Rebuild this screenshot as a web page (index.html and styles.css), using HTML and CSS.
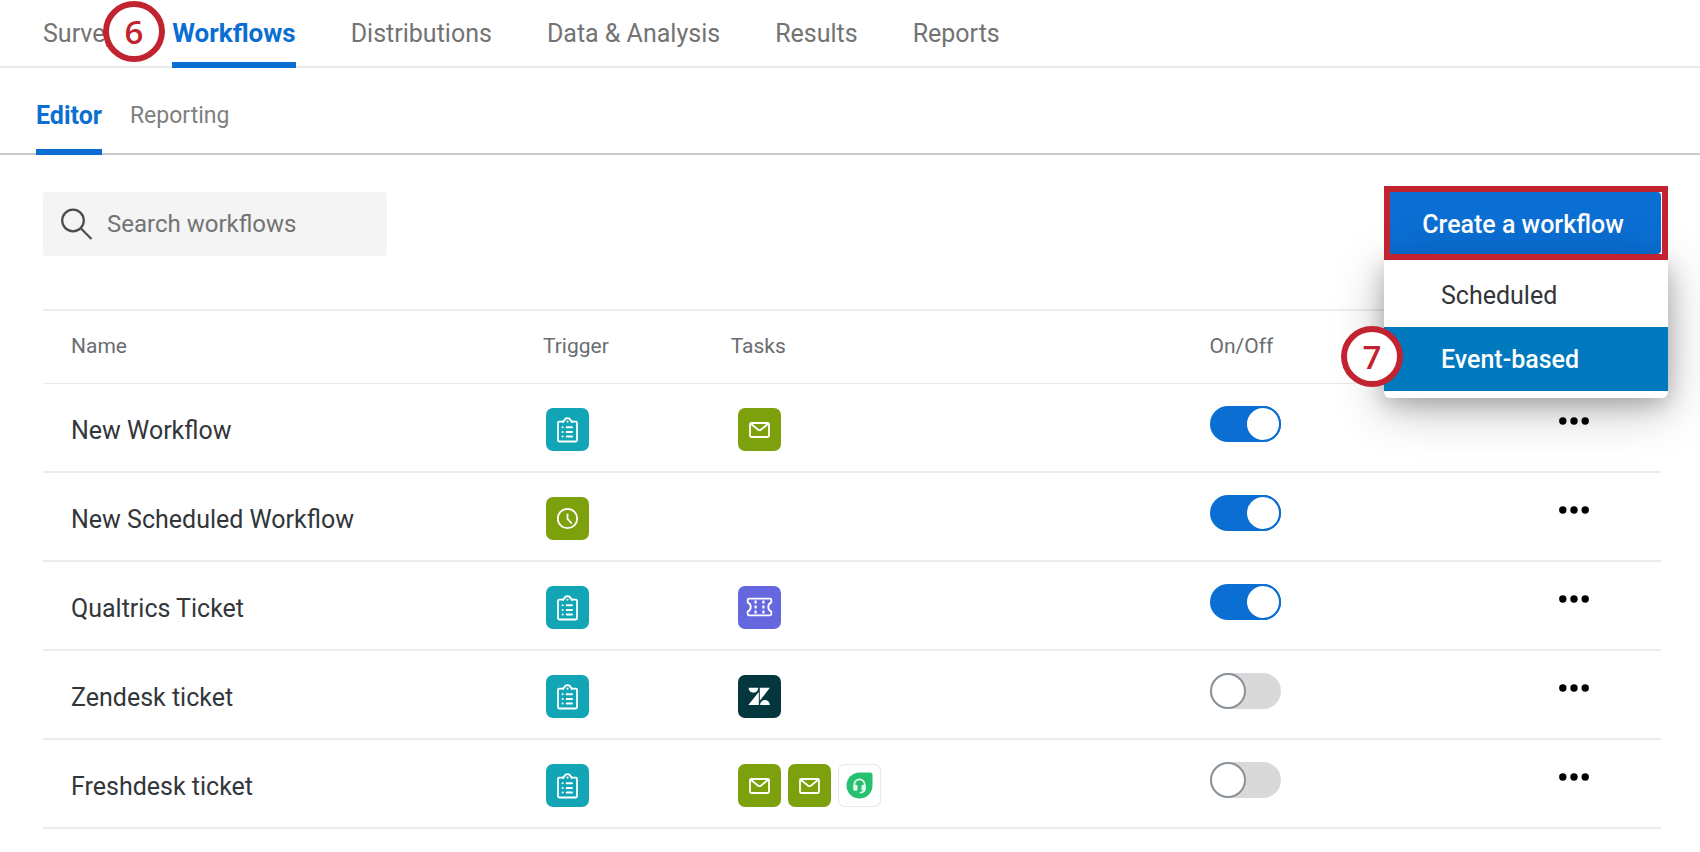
FILE: index.html
```html
<!DOCTYPE html>
<html lang="en">
<head>
<meta charset="utf-8">
<title>Workflows</title>
<link rel="stylesheet" href="styles.css">
</head>
<body>
<svg class="sprite" aria-hidden="true">
  <symbol id="i-survey" viewBox="0 0 43 43">
    <g fill="none" stroke="#fff" stroke-width="1.8" stroke-linejoin="round" stroke-linecap="round">
      <path d="M17.300 13.700H13.200Q12 13.700 12 14.900V32.300Q12 33.500 13.200 33.500H29.800Q31 33.500 31 32.300V14.900Q31 13.700 29.800 13.700H25.700"/>
      <path d="M17.300 14V13Q17.600 12.700 18.300 12.600A3.300 3.300 0 0 1 24.700 12.600Q25.400 12.700 25.700 13V14"/>
      <path stroke-width="2" d="M20.700 19.300H26M20.700 23.900H26M20.700 28.500H26M16.600 19.300H16.700M16.600 23.900H16.700M16.600 28.500H16.700"/>
    </g>
    <circle cx="21.500" cy="13.600" r="1.100" fill="#fff"/>
  </symbol>
  <symbol id="i-mail" viewBox="0 0 43 43">
    <g fill="none" stroke="#fff" stroke-width="1.800" stroke-linejoin="round">
      <rect x="12" y="15" width="19" height="14" rx="1.200"/>
      <path d="M12.500 15.500L20.200 21.700Q21.500 22.700 22.800 21.700L30.500 15.500"/>
    </g>
  </symbol>
  <symbol id="i-clock" viewBox="0 0 43 43">
    <g fill="none" stroke="#fff" stroke-width="1.800" stroke-linecap="round" stroke-linejoin="round">
      <circle cx="21.500" cy="21.500" r="9.700"/>
      <path d="M21.500 17.300V21.800L25.300 26"/>
    </g>
  </symbol>
  <symbol id="i-ticket" viewBox="0 0 43 43">
    <g fill="none" stroke="#fff" stroke-width="1.800" stroke-linejoin="round">
      <path d="M10.900 12.700H32.100Q33.300 12.700 33.300 13.900V16.400A5 5 0 0 0 33.300 25.600V28.100Q33.300 29.300 32.100 29.300H10.900Q9.700 29.300 9.700 28.100V25.600A5 5 0 0 0 9.700 16.400V13.900Q9.700 12.700 10.900 12.700Z"/>
      <path stroke-width="2.200" stroke-dasharray="3 2" d="M17.600 14.600V27.700M25.400 14.600V27.700"/>
    </g>
  </symbol>
  <symbol id="i-zendesk" viewBox="0 0 43 43">
    <g fill="#fff">
      <path d="M10.600 12.800H20.300A4.850 5 0 0 1 10.600 12.800Z"/>
      <path d="M20.800 17V30H10.300Z"/>
      <path d="M21.800 12.800H31.800L21.800 25.800Z"/>
      <path d="M22.100 30A4.850 5 0 0 1 31.800 30Z"/>
    </g>
  </symbol>
  <symbol id="i-freshdesk" viewBox="0 0 43 43">
    <path fill="#25c16f" d="M21.500 8.500H32Q34.500 8.500 34.500 11V21.500A13 13 0 1 1 21.500 8.500Z"/>
    <path d="M16.300 22V20.500A5.200 5.200 0 0 1 26.700 20.500V24.500Q26.700 28.300 22.500 28.700" fill="none" stroke="#e3f7ec" stroke-width="1.700" stroke-linecap="round"/>
    <rect x="15.300" y="20.800" width="4.200" height="6" rx="1.500" fill="#e3f7ec"/>
    <rect x="23.500" y="20.800" width="4.200" height="6" rx="1.500" fill="#e3f7ec"/>
  </symbol>
  <symbol id="i-dots" viewBox="0 0 30 8">
    <circle cx="3.800" cy="4" r="3.700"/><circle cx="15" cy="4" r="3.700"/><circle cx="26.200" cy="4" r="3.700"/>
  </symbol>
</svg>

<nav class="tabs" aria-label="Project">
  <div class="tab-slot">
    <a class="tab" href="#survey">Survey</a>
    <span class="step step-six">6</span>
  </div>
  <a class="tab active" href="#workflows" aria-current="page">Workflows</a>
  <a class="tab" href="#distributions">Distributions</a>
  <a class="tab" href="#data">Data &amp; Analysis</a>
  <a class="tab" href="#results">Results</a>
  <a class="tab" href="#reports">Reports</a>
</nav>

<nav class="subtabs" aria-label="Workflows">
  <a class="subtab active" href="#editor" aria-current="page">Editor</a>
  <a class="subtab" href="#reporting">Reporting</a>
</nav>

<main class="content">
  <div class="toolbar">
    <label class="search">
      <svg class="search-icon" viewBox="0 0 32 32" aria-hidden="true"><g fill="none" stroke="#4a4d50" stroke-width="2.200"><circle cx="12" cy="12.500" r="10.800"/><path d="M19.500 20L30.500 31"/></g></svg>
      <input class="search-input" type="search" placeholder="Search workflows" aria-label="Search workflows">
    </label>
    <div class="create">
      <button class="create-button" type="button" aria-haspopup="menu" aria-expanded="true">Create a workflow</button>
      <div class="menu" role="menu">
        <button class="menu-item" type="button" role="menuitem">Scheduled</button>
        <button class="menu-item selected" type="button" role="menuitem">Event-based</button>
        <span class="step step-seven">7</span>
      </div>
      <div class="highlight"></div>
    </div>
  </div>

  <table class="workflows">
    <colgroup><col class="col-name"><col class="col-trigger"><col class="col-tasks"><col class="col-state"><col class="col-more"></colgroup>
    <thead>
      <tr><th scope="col" class="name">Name</th><th scope="col">Trigger</th><th scope="col">Tasks</th><th scope="col">On/Off</th><th></th></tr>
    </thead>
    <tbody>
      <tr>
        <td class="name">New Workflow</td>
        <td class="trigger"><svg class="icon teal"><use href="#i-survey"/></svg></td>
        <td class="tasks"><svg class="icon green"><use href="#i-mail"/></svg></td>
        <td class="state"><input class="toggle" type="checkbox" role="switch" aria-label="New Workflow" checked></td>
        <td class="more"><button class="dots" type="button" aria-label="More options"><svg class="dots-icon"><use href="#i-dots"/></svg></button></td>
      </tr>
      <tr>
        <td class="name">New Scheduled Workflow</td>
        <td class="trigger"><svg class="icon green"><use href="#i-clock"/></svg></td>
        <td class="tasks"></td>
        <td class="state"><input class="toggle" type="checkbox" role="switch" aria-label="New Scheduled Workflow" checked></td>
        <td class="more"><button class="dots" type="button" aria-label="More options"><svg class="dots-icon"><use href="#i-dots"/></svg></button></td>
      </tr>
      <tr>
        <td class="name">Qualtrics Ticket</td>
        <td class="trigger"><svg class="icon teal"><use href="#i-survey"/></svg></td>
        <td class="tasks"><svg class="icon violet"><use href="#i-ticket"/></svg></td>
        <td class="state"><input class="toggle" type="checkbox" role="switch" aria-label="Qualtrics Ticket" checked></td>
        <td class="more"><button class="dots" type="button" aria-label="More options"><svg class="dots-icon"><use href="#i-dots"/></svg></button></td>
      </tr>
      <tr>
        <td class="name">Zendesk ticket</td>
        <td class="trigger"><svg class="icon teal"><use href="#i-survey"/></svg></td>
        <td class="tasks"><svg class="icon dark"><use href="#i-zendesk"/></svg></td>
        <td class="state"><input class="toggle" type="checkbox" role="switch" aria-label="Zendesk ticket"></td>
        <td class="more"><button class="dots" type="button" aria-label="More options"><svg class="dots-icon"><use href="#i-dots"/></svg></button></td>
      </tr>
      <tr>
        <td class="name">Freshdesk ticket</td>
        <td class="trigger"><svg class="icon teal"><use href="#i-survey"/></svg></td>
        <td class="tasks"><div class="icons"><svg class="icon green"><use href="#i-mail"/></svg><svg class="icon green"><use href="#i-mail"/></svg><svg class="icon outlined"><use href="#i-freshdesk"/></svg></div></td>
        <td class="state"><input class="toggle" type="checkbox" role="switch" aria-label="Freshdesk ticket"></td>
        <td class="more"><button class="dots" type="button" aria-label="More options"><svg class="dots-icon"><use href="#i-dots"/></svg></button></td>
      </tr>
    </tbody>
  </table>
</main>
</body>
</html>
```
FILE: styles.css
```css
*, *::before { box-sizing: border-box; }

body {
  margin: 0;
  background: #fff;
  color: #32363a;
  font: 25px/32px Roboto, "Liberation Sans", sans-serif;
}

button, input { font: inherit; margin: 0; }

.sprite { position: absolute; width: 0; height: 0; }

.tabs {
  display: flex;
  gap: 55px;
  height: 68px;
  padding-left: 43px;
  border-bottom: 2px solid #e9e9e9;
}

.tab-slot { position: relative; }

.tab, .subtab {
  display: block;
  color: #737373;
  text-decoration: none;
  white-space: nowrap;
}

.tab { height: 68px; padding-top: 18px; }

.subtabs {
  display: flex;
  gap: 28px;
  height: 87px;
  padding-left: 36px;
  border-bottom: 2px solid #c9c9c9;
}

.subtab {
  height: 87px;
  padding-top: 32px;
  color: #808080;
  font-size: 23px;
}

.tab.active, .subtab.active {
  color: #0b6ed3;
  border-bottom: 6px solid #0b6ed3;
  font-weight: 700;
}

.tab.active { padding-top: 17px; font-size: 26px; }
.subtab.active { font-size: 25px; }

.content { padding: 37px 39px 0 43px; }

.toolbar {
  display: flex;
  justify-content: space-between;
  align-items: flex-start;
}

.search {
  display: flex;
  align-items: center;
  gap: 14px;
  width: 344px;
  height: 64px;
  padding: 0 18px;
  background: #f4f4f4;
  border-radius: 4px;
}

.search-icon { flex: none; width: 32px; height: 32px; }

.search-input {
  flex: 1;
  min-width: 0;
  padding: 0;
  border: 0;
  background: none;
  font-size: 24px;
  outline: none;
}

.search-input::placeholder { color: #737373; opacity: 1; }

.create { position: relative; z-index: 1; }

.create-button {
  width: 276px;
  height: 62px;
  padding: 3px 0 0;
  border: 0;
  border-radius: 4px;
  background: #0b6ed3;
  color: #fff;
  font-weight: 500;
}

.highlight {
  position: absolute;
  top: -6px;
  right: -7px;
  bottom: -6px;
  left: -1px;
  border: 6px solid #c22331;
  pointer-events: none;
}

.menu {
  position: absolute;
  top: 68px;
  right: -7px;
  left: -1px;
  padding-bottom: 7px;
  border-radius: 0 0 6px 6px;
  background: #fff;
  box-shadow: 0 10px 50px rgba(0, 0, 0, 0.28), 0 6px 22px rgba(0, 0, 0, 0.2);
}

.menu-item {
  display: block;
  width: 100%;
  height: 64px;
  padding: 2px 57px 0;
  border: 0;
  background: none;
  color: #32363a;
  text-align: left;
}

.menu-item:first-child { height: 67px; padding-top: 4px; }

.menu-item.selected { background: #0079bf; color: #fff; font-weight: 500; }

.step {
  position: absolute;
  width: 62px;
  height: 61px;
  border: 6px solid #c22331;
  border-radius: 50%;
  background: #fff;
  color: #c22331;
  font: 600 33px/49px "Open Sans", "Noto Sans", sans-serif;
  text-align: center;
}

.step-six { top: 1px; left: 60px; }
.step-seven { top: 66px; left: -43px; }

.workflows {
  width: 100%;
  margin-top: 53px;
  table-layout: fixed;
  border-collapse: separate;
  border-spacing: 0;
}

.col-name { width: 30.9%; }
.col-trigger { width: 11.6%; }
.col-tasks { width: 29.6%; }
.col-state { width: 21.6%; }
.col-more { width: 6.3%; }

th {
  height: 75px;
  padding: 0 0 2px;
  border-top: 2px solid #ececec;
  border-bottom: 1px solid #e9e9e9;
  color: #6a6d70;
  font-size: 21px;
  font-weight: 400;
  text-align: left;
}

td {
  height: 89px;
  padding: 0;
  border-bottom: 2px solid #ececec;
  vertical-align: top;
}

th.name, td.name { padding-left: 28px; }
td.name { padding-top: 31px; }
td.trigger { padding: 24px 0 0 3px; }
td.tasks { padding: 24px 0 0 7px; }
td.state { padding-top: 22px; }
td.more { padding-top: 33px; }

.icons { display: flex; gap: 7px; }

.icon {
  display: block;
  width: 43px;
  height: 43px;
  border-radius: 7px;
}

.teal { background: #12a5b5; }
.green { background: #7ca10c; }
.violet { background: #6467de; }
.dark { background: #03363d; }
.outlined { background: #fff; box-shadow: inset 0 0 0 1px #e8e8e8; }

.toggle {
  display: block;
  width: 71px;
  height: 36px;
  border-radius: 18px;
  background: #d9d9d9;
  appearance: none;
}

.toggle::before {
  content: "";
  display: block;
  width: 36px;
  height: 36px;
  border: 2px solid #89919a;
  border-radius: 50%;
  background: #fff;
}

.toggle:checked { background: #0b6ed3; }
.toggle:checked::before { margin-left: auto; border-color: #0b6ed3; }

.dots {
  display: block;
  padding: 0;
  border: 0;
  background: none;
}

.dots-icon { display: block; width: 30px; height: 8px; }
```
